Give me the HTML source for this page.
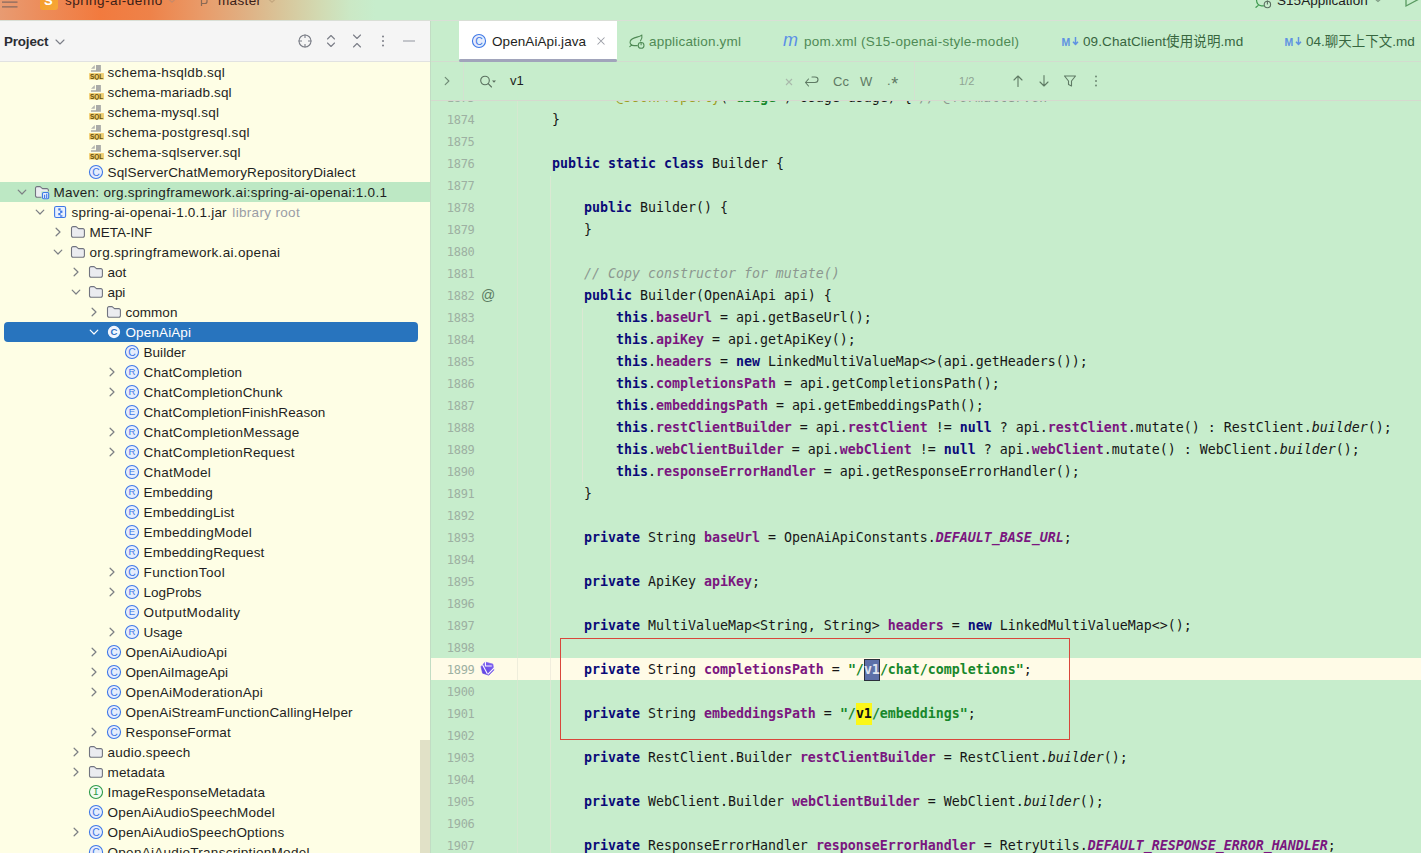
<!DOCTYPE html>
<html lang="en"><head><meta charset="utf-8"><title>OpenAiApi.java</title>
<style>
*{box-sizing:border-box;margin:0;padding:0}
html,body{width:1421px;height:853px;overflow:hidden;background:#c7edcc}
body{position:relative;font-family:"Liberation Sans","Noto Sans CJK SC",sans-serif;font-size:13px;color:#1e1f22}
.abs{position:absolute}
svg{display:block}
/* top bar */
#topbar{position:absolute;left:0;top:0;width:1421px;height:20px;overflow:hidden;
 background:linear-gradient(90deg,#e89b72 0px,#ec8d5c 40px,#f27a3e 100px,#ee8249 150px,#e99a68 200px,#e0b083 245px,#d8c79c 285px,#d2dab2 320px,#cbe8c5 350px,#c7edcc 375px)}
#topline{position:absolute;left:0;top:20px;width:1421px;height:1px;background:#d9dfd6}
#topbar .t{position:absolute;font-size:13.5px;line-height:18px;top:-8px;color:#3a2018;white-space:nowrap}
/* project panel */
#ppanel{position:absolute;left:0;top:21px;width:430px;height:832px;background:#fefee5;overflow:hidden}
#phead{position:absolute;left:0;top:0;width:430px;height:40px;background:#f5f5f5}
#pheadline{position:absolute;left:0;top:40px;width:430px;height:1px;background:#e1e2e1}
#phead .title{position:absolute;left:4px;top:12px;font-size:13.4px;line-height:18px;font-weight:bold;color:#2b2d33;letter-spacing:-0.15px}
#pborder{position:absolute;left:430px;top:21px;width:1px;height:832px;background:#c2dcc4}
.row{position:absolute;left:0;width:430px;height:20px;line-height:20px;white-space:nowrap}
.row .tx{position:absolute;top:1px;font-size:13.5px;color:#1e1f22;letter-spacing:0}
.row .icw{position:absolute;top:2px;width:16px;height:16px}
.row .arw{position:absolute;top:2px;width:16px;height:16px}
.row .lib{color:#9a9da6;margin-left:5.5px;letter-spacing:0.33px}
.mvnrow{background:#bde8c4}
.sel .tx{color:#fff}
.selbg{position:absolute;left:4px;top:0;width:414px;height:20px;border-radius:4px;background:#2874be}
#pscroll{position:absolute;left:420px;top:719px;width:10px;height:113px;background:#e1e1c7}
/* tabs */
#tabs{position:absolute;left:431px;top:21px;width:990px;height:41px}
#tabline{position:absolute;left:431px;top:61px;width:990px;height:1px;background:#d3dccf}
#tabact{position:absolute;left:459px;top:21px;width:158px;height:38px;background:#fff}
#tabul{position:absolute;left:459px;top:59px;width:158px;height:3px;background:#a1a4bb;border-radius:1.5px}
.tab{position:absolute;top:33px;font-size:13.5px;line-height:18px;white-space:nowrap;color:#1e1f22}
.tab.g{color:#4f8a55}
.tab.gy{color:#5f7a64}
/* search */
#search{position:absolute;left:431px;top:62px;width:990px;height:38px}
#searchline{position:absolute;left:431px;top:100px;width:990px;height:1px;background:#d6d9cf}
.vdiv{position:absolute;top:62px;width:1px;height:38px;background:#d3e2d0}
/* editor */
#editor{position:absolute;left:431px;top:101px;width:990px;height:752px;overflow:hidden}
.ln{position:absolute;left:431px;width:43.5px;text-align:right;height:22px;line-height:22px;font-family:"DejaVu Sans Mono","Liberation Mono",monospace;font-size:12px;color:#9db0a2;letter-spacing:-0.3px}
.cl{position:absolute;left:520px;height:22px;line-height:22px;white-space:pre;font-family:"DejaVu Sans Mono","Liberation Mono",monospace;font-size:13.29px;color:#161616}
.cl b{font-weight:bold}
.k{color:#0a0a78}
.f{color:#7a167f}
.i{font-style:italic}
.s{color:#17872a}
.c{color:#8c9890}
.an{color:#9e9d24}
.v1s{display:inline-block;height:22px;vertical-align:top;background:#5d70a8;color:#dfe3ef;box-shadow:inset 0 0 0 1px #2b2f3a}
.v1y{display:inline-block;height:22px;vertical-align:top;background:#fbf719;color:#111}
#curline{position:absolute;left:431px;top:658px;width:990px;height:22px;background:#fffbe7}
#gutline{position:absolute;left:517px;top:101px;width:1px;height:752px;background:rgba(226,226,212,0.55)}
.guide{position:absolute;width:1px;background:rgba(232,228,215,0.6)}
#redbox{position:absolute;left:560px;top:638px;width:510px;height:102px;border:1.5px solid #d9463b}
#clipmask{position:absolute;left:431px;top:62px;width:990px;height:39px;background:#c7edcc}

.md{font-size:10.5px;line-height:14px;font-weight:bold;color:#5f92e2;letter-spacing:0}

</style></head>
<body>
<div id="topbar">
  <svg class="abs" style="left:0;top:0" width="20" height="8" viewBox="0 0 20 8"><path d="M2 2.200 H17.500 M2 6.900 H17.500" stroke="#86695f" stroke-width="1.200" fill="none"/></svg>
  <div class="abs" style="left:39.500px;top:-10.500px;width:18px;height:20px;border-radius:3px;background:linear-gradient(135deg,#f59a2c,#f6a836)"></div>
  <div class="t" style="left:44px;color:#fff;font-weight:bold;font-size:13px;top:-8px">S</div>
  <div class="t" style="left:65px;letter-spacing:0.55px">spring-ai-demo</div>
  <svg class="abs" style="left:165.500px;top:-1.500px" width="12" height="6" viewBox="0 0 12 6"><path d="M2.500 0 L6 3.200 L9.500 0" stroke="#c98a68" stroke-width="1.2" fill="none"/></svg>
  <svg class="abs" style="left:198px;top:0" width="12" height="8" viewBox="0 0 12 8"><path d="M3.5 0 V6 M3.5 3.5 H7 Q9 3.5 9 1.5 V0" stroke="#8a6a55" stroke-width="1.2" fill="none"/></svg>
  <div class="t" style="left:218px;letter-spacing:0.35px">master</div>
  <svg class="abs" style="left:266px;top:-1.500px" width="12" height="6" viewBox="0 0 12 6"><path d="M2.500 0 L6 3.200 L9.500 0" stroke="#c4a880" stroke-width="1.2" fill="none"/></svg>
  <svg class="abs" style="left:1255px;top:0" width="18" height="10" viewBox="0 0 18 10"><path d="M1.500 0 Q1.800 5.500 6.500 5.800 H8.500 M1 7.300 L3 5.600" stroke="#3f9a50" stroke-width="1.200" fill="none" stroke-linecap="round"/><circle cx="12.400" cy="4.500" r="3.200" stroke="#5a6f60" stroke-width="1.100" fill="none"/><path d="M12.400 0.500 V4.500" stroke="#5a6f60" stroke-width="1.100"/></svg>
  <div class="t" style="left:1277px;color:#1c201c;letter-spacing:0.05px">S15Application</div>
  <svg class="abs" style="left:1372px;top:-2px" width="12" height="6" viewBox="0 0 12 6"><path d="M2 0 L6 3.5 L10 0" stroke="#7f9a85" stroke-width="1.2" fill="none"/></svg>
  <svg class="abs" style="left:1404px;top:0" width="17" height="8" viewBox="0 0 17 8"><path d="M2 0 V6 L17 -2" stroke="#5a9a62" stroke-width="1.3" fill="none"/></svg>
</div>
<div id="topline"></div>

<div id="ppanel">
  <div id="phead">
    <div class="title">Project</div>
    <svg class="abs" style="left:52px;top:13px" width="16" height="16" viewBox="0 0 16 16"><path d="M4 6 L8 10 L12 6" fill="none" stroke="#7b7e87" stroke-width="1.1" stroke-linecap="round" stroke-linejoin="round"/></svg>
    <svg class="abs" style="left:297px;top:12px" width="16" height="16" viewBox="0 0 16 16"><circle cx="8" cy="8" r="6" fill="none" stroke="#7b7e87" stroke-width="1.1"/><path d="M8 1.5 V5 M8 11 V14.5 M1.5 8 H5 M11 8 H14.5" stroke="#7b7e87" stroke-width="1.1"/></svg>
    <svg class="abs" style="left:323px;top:12px" width="16" height="16" viewBox="0 0 16 16"><path d="M4.5 6 L8 2.5 L11.5 6 M4.5 10 L8 13.5 L11.5 10" fill="none" stroke="#7b7e87" stroke-width="1.1" stroke-linecap="round" stroke-linejoin="round"/></svg>
    <svg class="abs" style="left:349px;top:12px" width="16" height="16" viewBox="0 0 16 16"><path d="M4.5 2 L8 5.5 L11.5 2 M4.5 14 L8 10.5 L11.5 14" fill="none" stroke="#7b7e87" stroke-width="1.1" stroke-linecap="round" stroke-linejoin="round"/></svg>
    <svg class="abs" style="left:375px;top:12px" width="16" height="16" viewBox="0 0 16 16"><circle cx="8" cy="3.5" r="1" fill="#7b7e87"/><circle cx="8" cy="8" r="1" fill="#7b7e87"/><circle cx="8" cy="12.5" r="1" fill="#7b7e87"/></svg>
    <svg class="abs" style="left:401px;top:12px" width="16" height="16" viewBox="0 0 16 16"><path d="M2 8 H14" stroke="#9a9da6" stroke-width="1.1"/></svg>
  </div>
  <div id="pheadline"></div>
  <div id="tree" style="position:absolute;left:0;top:-21px;width:430px;height:874px">
<div class="row" style="top:62px"><span class="icw" style="left:88px"><svg class="ic" width="16" height="16" viewBox="0 0 16 16"><path d="M3 4.700 L6.800 0.900 L6.800 4.700 Z" fill="#b4b5b0"/><path d="M8 0.900 H12.900 V7.700 H3 V6.200 H8 Z" fill="#aaaba8"/><rect x="1.100" y="9.100" width="14.800" height="6.500" fill="#f1cd6e"/><text x="8.500" y="14.900" text-anchor="middle" font-family="Liberation Sans, sans-serif" font-weight="bold" font-size="6.800" fill="#65500c" textLength="13.200" lengthAdjust="spacingAndGlyphs">SQL</text></svg></span><span class="tx" style="left:107.5px;letter-spacing:0.30px">schema-hsqldb.sql</span></div>
<div class="row" style="top:82px"><span class="icw" style="left:88px"><svg class="ic" width="16" height="16" viewBox="0 0 16 16"><path d="M3 4.700 L6.800 0.900 L6.800 4.700 Z" fill="#b4b5b0"/><path d="M8 0.900 H12.900 V7.700 H3 V6.200 H8 Z" fill="#aaaba8"/><rect x="1.100" y="9.100" width="14.800" height="6.500" fill="#f1cd6e"/><text x="8.500" y="14.900" text-anchor="middle" font-family="Liberation Sans, sans-serif" font-weight="bold" font-size="6.800" fill="#65500c" textLength="13.200" lengthAdjust="spacingAndGlyphs">SQL</text></svg></span><span class="tx" style="left:107.5px;letter-spacing:0.15px">schema-mariadb.sql</span></div>
<div class="row" style="top:102px"><span class="icw" style="left:88px"><svg class="ic" width="16" height="16" viewBox="0 0 16 16"><path d="M3 4.700 L6.800 0.900 L6.800 4.700 Z" fill="#b4b5b0"/><path d="M8 0.900 H12.900 V7.700 H3 V6.200 H8 Z" fill="#aaaba8"/><rect x="1.100" y="9.100" width="14.800" height="6.500" fill="#f1cd6e"/><text x="8.500" y="14.900" text-anchor="middle" font-family="Liberation Sans, sans-serif" font-weight="bold" font-size="6.800" fill="#65500c" textLength="13.200" lengthAdjust="spacingAndGlyphs">SQL</text></svg></span><span class="tx" style="left:107.5px;letter-spacing:0.23px">schema-mysql.sql</span></div>
<div class="row" style="top:122px"><span class="icw" style="left:88px"><svg class="ic" width="16" height="16" viewBox="0 0 16 16"><path d="M3 4.700 L6.800 0.900 L6.800 4.700 Z" fill="#b4b5b0"/><path d="M8 0.900 H12.900 V7.700 H3 V6.200 H8 Z" fill="#aaaba8"/><rect x="1.100" y="9.100" width="14.800" height="6.500" fill="#f1cd6e"/><text x="8.500" y="14.900" text-anchor="middle" font-family="Liberation Sans, sans-serif" font-weight="bold" font-size="6.800" fill="#65500c" textLength="13.200" lengthAdjust="spacingAndGlyphs">SQL</text></svg></span><span class="tx" style="left:107.5px;letter-spacing:0.35px">schema-postgresql.sql</span></div>
<div class="row" style="top:142px"><span class="icw" style="left:88px"><svg class="ic" width="16" height="16" viewBox="0 0 16 16"><path d="M3 4.700 L6.800 0.900 L6.800 4.700 Z" fill="#b4b5b0"/><path d="M8 0.900 H12.900 V7.700 H3 V6.200 H8 Z" fill="#aaaba8"/><rect x="1.100" y="9.100" width="14.800" height="6.500" fill="#f1cd6e"/><text x="8.500" y="14.900" text-anchor="middle" font-family="Liberation Sans, sans-serif" font-weight="bold" font-size="6.800" fill="#65500c" textLength="13.200" lengthAdjust="spacingAndGlyphs">SQL</text></svg></span><span class="tx" style="left:107.5px;letter-spacing:0.33px">schema-sqlserver.sql</span></div>
<div class="row" style="top:162px"><span class="icw" style="left:88px"><svg class="ic" width="16" height="16" viewBox="0 0 16 16"><circle cx="8" cy="8" r="6.55" fill="#e6edfc" stroke="#3f78e6" stroke-width="1.1"/><text x="8" y="11.7" text-anchor="middle" font-family="Liberation Sans, sans-serif" font-size="10.4" font-weight="normal" fill="#3f78e6">C</text></svg></span><span class="tx" style="left:107.5px;letter-spacing:0.16px">SqlServerChatMemoryRepositoryDialect</span></div>
<div class="row mvnrow" style="top:182px"><span class="arw" style="left:13.5px"><svg class="ar" width="16" height="16" viewBox="0 0 16 16"><path d="M4.2 6.1 L8 10 L11.8 6.1" fill="none" stroke="#7c7f84" stroke-width="1.2" stroke-linecap="round" stroke-linejoin="round"/></svg></span><span class="icw" style="left:34px"><svg class="ic" width="16" height="16" viewBox="0 0 16 16"><path d="M1.5 4.1 a1.5 1.5 0 0 1 1.5 -1.5 h3.1 l2.4 2 h4.4 a1.5 1.5 0 0 1 1.5 1.5 v5.6 a1.5 1.5 0 0 1 -1.5 1.5 h-9.900 a1.5 1.5 0 0 1 -1.5 -1.5 z" fill="#ebecf0" stroke="#71747f" stroke-width="1.1" stroke-linejoin="round"/><rect x="7.4" y="7.4" width="9" height="9" fill="#bde8c4"/><rect x="8.5" y="8.5" width="6.2" height="6.2" rx="1.2" fill="#e6eefc" stroke="#3f78e6" stroke-width="1.1"/><path d="M10.6 10.8 V14 M12.7 9.8 V14" stroke="#3f78e6" stroke-width="1.1" fill="none"/></svg></span><span class="tx" style="left:53.5px;letter-spacing:0.27px">Maven: org.springframework.ai:spring-ai-openai:1.0.1</span></div>
<div class="row" style="top:202px"><span class="arw" style="left:31.5px"><svg class="ar" width="16" height="16" viewBox="0 0 16 16"><path d="M4.2 6.1 L8 10 L11.8 6.1" fill="none" stroke="#7c7f84" stroke-width="1.2" stroke-linecap="round" stroke-linejoin="round"/></svg></span><span class="icw" style="left:52px"><svg class="ic" width="16" height="16" viewBox="0 0 16 16"><rect x="2.6" y="2.5" width="11" height="11" rx="1.6" fill="#e9f0fd" stroke="#3f78e6" stroke-width="1.1"/><rect x="6.3" y="4.3" width="2.3" height="2.2" fill="#3f78e6"/><rect x="8.1" y="6.6" width="2.3" height="2.3" fill="#3f78e6"/><rect x="6.3" y="9" width="2.3" height="2.2" fill="#3f78e6"/><rect x="8.1" y="11.3" width="2.3" height="1.4" fill="#3f78e6"/></svg></span><span class="tx" style="left:71.5px;letter-spacing:0.20px">spring-ai-openai-1.0.1.jar<span class="lib">library root</span></span></div>
<div class="row" style="top:222px"><span class="arw" style="left:49.5px"><svg class="ar" width="16" height="16" viewBox="0 0 16 16"><path d="M6.1 4.2 L10 8 L6.1 11.8" fill="none" stroke="#7c7f84" stroke-width="1.2" stroke-linecap="round" stroke-linejoin="round"/></svg></span><span class="icw" style="left:70px"><svg class="ic" width="16" height="16" viewBox="0 0 16 16"><path d="M1.5 4.1 a1.5 1.5 0 0 1 1.5 -1.5 h3.1 l2.4 2 h4.4 a1.5 1.5 0 0 1 1.5 1.5 v5.6 a1.5 1.5 0 0 1 -1.5 1.5 h-9.900 a1.5 1.5 0 0 1 -1.5 -1.5 z" fill="#ebecf0" stroke="#71747f" stroke-width="1.1" stroke-linejoin="round"/></svg></span><span class="tx" style="left:89.5px;letter-spacing:0.01px">META-INF</span></div>
<div class="row" style="top:242px"><span class="arw" style="left:49.5px"><svg class="ar" width="16" height="16" viewBox="0 0 16 16"><path d="M4.2 6.1 L8 10 L11.8 6.1" fill="none" stroke="#7c7f84" stroke-width="1.2" stroke-linecap="round" stroke-linejoin="round"/></svg></span><span class="icw" style="left:70px"><svg class="ic" width="16" height="16" viewBox="0 0 16 16"><path d="M1.5 4.1 a1.5 1.5 0 0 1 1.5 -1.5 h3.1 l2.4 2 h4.4 a1.5 1.5 0 0 1 1.5 1.5 v5.6 a1.5 1.5 0 0 1 -1.5 1.5 h-9.900 a1.5 1.5 0 0 1 -1.5 -1.5 z" fill="#ebecf0" stroke="#71747f" stroke-width="1.1" stroke-linejoin="round"/></svg></span><span class="tx" style="left:89.5px;letter-spacing:0.32px">org.springframework.ai.openai</span></div>
<div class="row" style="top:262px"><span class="arw" style="left:67.5px"><svg class="ar" width="16" height="16" viewBox="0 0 16 16"><path d="M6.1 4.2 L10 8 L6.1 11.8" fill="none" stroke="#7c7f84" stroke-width="1.2" stroke-linecap="round" stroke-linejoin="round"/></svg></span><span class="icw" style="left:88px"><svg class="ic" width="16" height="16" viewBox="0 0 16 16"><path d="M1.5 4.1 a1.5 1.5 0 0 1 1.5 -1.5 h3.1 l2.4 2 h4.4 a1.5 1.5 0 0 1 1.5 1.5 v5.6 a1.5 1.5 0 0 1 -1.5 1.5 h-9.900 a1.5 1.5 0 0 1 -1.5 -1.5 z" fill="#ebecf0" stroke="#71747f" stroke-width="1.1" stroke-linejoin="round"/></svg></span><span class="tx" style="left:107.5px;letter-spacing:0.01px">aot</span></div>
<div class="row" style="top:282px"><span class="arw" style="left:67.5px"><svg class="ar" width="16" height="16" viewBox="0 0 16 16"><path d="M4.2 6.1 L8 10 L11.8 6.1" fill="none" stroke="#7c7f84" stroke-width="1.2" stroke-linecap="round" stroke-linejoin="round"/></svg></span><span class="icw" style="left:88px"><svg class="ic" width="16" height="16" viewBox="0 0 16 16"><path d="M1.5 4.1 a1.5 1.5 0 0 1 1.5 -1.5 h3.1 l2.4 2 h4.4 a1.5 1.5 0 0 1 1.5 1.5 v5.6 a1.5 1.5 0 0 1 -1.5 1.5 h-9.900 a1.5 1.5 0 0 1 -1.5 -1.5 z" fill="#ebecf0" stroke="#71747f" stroke-width="1.1" stroke-linejoin="round"/></svg></span><span class="tx" style="left:107.5px;letter-spacing:-0.10px">api</span></div>
<div class="row" style="top:302px"><span class="arw" style="left:85.5px"><svg class="ar" width="16" height="16" viewBox="0 0 16 16"><path d="M6.1 4.2 L10 8 L6.1 11.8" fill="none" stroke="#7c7f84" stroke-width="1.2" stroke-linecap="round" stroke-linejoin="round"/></svg></span><span class="icw" style="left:106px"><svg class="ic" width="16" height="16" viewBox="0 0 16 16"><path d="M1.5 4.1 a1.5 1.5 0 0 1 1.5 -1.5 h3.1 l2.4 2 h4.4 a1.5 1.5 0 0 1 1.5 1.5 v5.6 a1.5 1.5 0 0 1 -1.5 1.5 h-9.900 a1.5 1.5 0 0 1 -1.5 -1.5 z" fill="#ebecf0" stroke="#71747f" stroke-width="1.1" stroke-linejoin="round"/></svg></span><span class="tx" style="left:125.5px;letter-spacing:0.03px">common</span></div>
<div class="row sel" style="top:322px"><div class="selbg"></div><span class="arw" style="left:85.5px"><svg class="ar" width="16" height="16" viewBox="0 0 16 16"><path d="M4.2 6.1 L8 10 L11.8 6.1" fill="none" stroke="#ffffff" stroke-width="1.2" stroke-linecap="round" stroke-linejoin="round"/></svg></span><span class="icw" style="left:106px"><svg class="ic" width="16" height="16" viewBox="0 0 16 16"><circle cx="8" cy="8" r="5.6" fill="#f1f6fe" stroke="#f1f6fe" stroke-width="1.1"/><text x="8" y="11.45" text-anchor="middle" font-family="Liberation Sans, sans-serif" font-size="9.6" font-weight="bold" fill="#2a6fc2">C</text></svg></span><span class="tx" style="left:125.5px;letter-spacing:0.12px">OpenAiApi</span></div>
<div class="row" style="top:342px"><span class="icw" style="left:124px"><svg class="ic" width="16" height="16" viewBox="0 0 16 16"><circle cx="8" cy="8" r="6.55" fill="#e6edfc" stroke="#3f78e6" stroke-width="1.1"/><text x="8" y="11.7" text-anchor="middle" font-family="Liberation Sans, sans-serif" font-size="10.4" font-weight="normal" fill="#3f78e6">C</text></svg></span><span class="tx" style="left:143.5px;letter-spacing:0.04px">Builder</span></div>
<div class="row" style="top:362px"><span class="arw" style="left:103.5px"><svg class="ar" width="16" height="16" viewBox="0 0 16 16"><path d="M6.1 4.2 L10 8 L6.1 11.8" fill="none" stroke="#7c7f84" stroke-width="1.2" stroke-linecap="round" stroke-linejoin="round"/></svg></span><span class="icw" style="left:124px"><svg class="ic" width="16" height="16" viewBox="0 0 16 16"><circle cx="8" cy="8" r="6.55" fill="#e6edfc" stroke="#3f78e6" stroke-width="1.1"/><text x="8" y="11.4" text-anchor="middle" font-family="Liberation Sans, sans-serif" font-size="9.6" font-weight="normal" fill="#3f78e6">R</text></svg></span><span class="tx" style="left:143.5px;letter-spacing:0.14px">ChatCompletion</span></div>
<div class="row" style="top:382px"><span class="arw" style="left:103.5px"><svg class="ar" width="16" height="16" viewBox="0 0 16 16"><path d="M6.1 4.2 L10 8 L6.1 11.8" fill="none" stroke="#7c7f84" stroke-width="1.2" stroke-linecap="round" stroke-linejoin="round"/></svg></span><span class="icw" style="left:124px"><svg class="ic" width="16" height="16" viewBox="0 0 16 16"><circle cx="8" cy="8" r="6.55" fill="#e6edfc" stroke="#3f78e6" stroke-width="1.1"/><text x="8" y="11.4" text-anchor="middle" font-family="Liberation Sans, sans-serif" font-size="9.6" font-weight="normal" fill="#3f78e6">R</text></svg></span><span class="tx" style="left:143.5px;letter-spacing:0.17px">ChatCompletionChunk</span></div>
<div class="row" style="top:402px"><span class="icw" style="left:124px"><svg class="ic" width="16" height="16" viewBox="0 0 16 16"><circle cx="8" cy="8" r="6.55" fill="#e6edfc" stroke="#3f78e6" stroke-width="1.1"/><text x="8" y="11.4" text-anchor="middle" font-family="Liberation Sans, sans-serif" font-size="9.6" font-weight="normal" fill="#3f78e6">E</text></svg></span><span class="tx" style="left:143.5px;letter-spacing:0.10px">ChatCompletionFinishReason</span></div>
<div class="row" style="top:422px"><span class="arw" style="left:103.5px"><svg class="ar" width="16" height="16" viewBox="0 0 16 16"><path d="M6.1 4.2 L10 8 L6.1 11.8" fill="none" stroke="#7c7f84" stroke-width="1.2" stroke-linecap="round" stroke-linejoin="round"/></svg></span><span class="icw" style="left:124px"><svg class="ic" width="16" height="16" viewBox="0 0 16 16"><circle cx="8" cy="8" r="6.55" fill="#e6edfc" stroke="#3f78e6" stroke-width="1.1"/><text x="8" y="11.4" text-anchor="middle" font-family="Liberation Sans, sans-serif" font-size="9.6" font-weight="normal" fill="#3f78e6">R</text></svg></span><span class="tx" style="left:143.5px;letter-spacing:0.21px">ChatCompletionMessage</span></div>
<div class="row" style="top:442px"><span class="arw" style="left:103.5px"><svg class="ar" width="16" height="16" viewBox="0 0 16 16"><path d="M6.1 4.2 L10 8 L6.1 11.8" fill="none" stroke="#7c7f84" stroke-width="1.2" stroke-linecap="round" stroke-linejoin="round"/></svg></span><span class="icw" style="left:124px"><svg class="ic" width="16" height="16" viewBox="0 0 16 16"><circle cx="8" cy="8" r="6.55" fill="#e6edfc" stroke="#3f78e6" stroke-width="1.1"/><text x="8" y="11.4" text-anchor="middle" font-family="Liberation Sans, sans-serif" font-size="9.6" font-weight="normal" fill="#3f78e6">R</text></svg></span><span class="tx" style="left:143.5px;letter-spacing:0.19px">ChatCompletionRequest</span></div>
<div class="row" style="top:462px"><span class="icw" style="left:124px"><svg class="ic" width="16" height="16" viewBox="0 0 16 16"><circle cx="8" cy="8" r="6.55" fill="#e6edfc" stroke="#3f78e6" stroke-width="1.1"/><text x="8" y="11.4" text-anchor="middle" font-family="Liberation Sans, sans-serif" font-size="9.6" font-weight="normal" fill="#3f78e6">E</text></svg></span><span class="tx" style="left:143.5px;letter-spacing:0.25px">ChatModel</span></div>
<div class="row" style="top:482px"><span class="icw" style="left:124px"><svg class="ic" width="16" height="16" viewBox="0 0 16 16"><circle cx="8" cy="8" r="6.55" fill="#e6edfc" stroke="#3f78e6" stroke-width="1.1"/><text x="8" y="11.4" text-anchor="middle" font-family="Liberation Sans, sans-serif" font-size="9.6" font-weight="normal" fill="#3f78e6">R</text></svg></span><span class="tx" style="left:143.5px;letter-spacing:0.11px">Embedding</span></div>
<div class="row" style="top:502px"><span class="icw" style="left:124px"><svg class="ic" width="16" height="16" viewBox="0 0 16 16"><circle cx="8" cy="8" r="6.55" fill="#e6edfc" stroke="#3f78e6" stroke-width="1.1"/><text x="8" y="11.4" text-anchor="middle" font-family="Liberation Sans, sans-serif" font-size="9.6" font-weight="normal" fill="#3f78e6">R</text></svg></span><span class="tx" style="left:143.5px;letter-spacing:0.13px">EmbeddingList</span></div>
<div class="row" style="top:522px"><span class="icw" style="left:124px"><svg class="ic" width="16" height="16" viewBox="0 0 16 16"><circle cx="8" cy="8" r="6.55" fill="#e6edfc" stroke="#3f78e6" stroke-width="1.1"/><text x="8" y="11.4" text-anchor="middle" font-family="Liberation Sans, sans-serif" font-size="9.6" font-weight="normal" fill="#3f78e6">E</text></svg></span><span class="tx" style="left:143.5px;letter-spacing:0.24px">EmbeddingModel</span></div>
<div class="row" style="top:542px"><span class="icw" style="left:124px"><svg class="ic" width="16" height="16" viewBox="0 0 16 16"><circle cx="8" cy="8" r="6.55" fill="#e6edfc" stroke="#3f78e6" stroke-width="1.1"/><text x="8" y="11.4" text-anchor="middle" font-family="Liberation Sans, sans-serif" font-size="9.6" font-weight="normal" fill="#3f78e6">R</text></svg></span><span class="tx" style="left:143.5px;letter-spacing:0.15px">EmbeddingRequest</span></div>
<div class="row" style="top:562px"><span class="arw" style="left:103.5px"><svg class="ar" width="16" height="16" viewBox="0 0 16 16"><path d="M6.1 4.2 L10 8 L6.1 11.8" fill="none" stroke="#7c7f84" stroke-width="1.2" stroke-linecap="round" stroke-linejoin="round"/></svg></span><span class="icw" style="left:124px"><svg class="ic" width="16" height="16" viewBox="0 0 16 16"><circle cx="8" cy="8" r="6.55" fill="#e6edfc" stroke="#3f78e6" stroke-width="1.1"/><text x="8" y="11.7" text-anchor="middle" font-family="Liberation Sans, sans-serif" font-size="10.4" font-weight="normal" fill="#3f78e6">C</text></svg></span><span class="tx" style="left:143.5px;letter-spacing:0.43px">FunctionTool</span></div>
<div class="row" style="top:582px"><span class="arw" style="left:103.5px"><svg class="ar" width="16" height="16" viewBox="0 0 16 16"><path d="M6.1 4.2 L10 8 L6.1 11.8" fill="none" stroke="#7c7f84" stroke-width="1.2" stroke-linecap="round" stroke-linejoin="round"/></svg></span><span class="icw" style="left:124px"><svg class="ic" width="16" height="16" viewBox="0 0 16 16"><circle cx="8" cy="8" r="6.55" fill="#e6edfc" stroke="#3f78e6" stroke-width="1.1"/><text x="8" y="11.4" text-anchor="middle" font-family="Liberation Sans, sans-serif" font-size="9.6" font-weight="normal" fill="#3f78e6">R</text></svg></span><span class="tx" style="left:143.5px;letter-spacing:0.03px">LogProbs</span></div>
<div class="row" style="top:602px"><span class="icw" style="left:124px"><svg class="ic" width="16" height="16" viewBox="0 0 16 16"><circle cx="8" cy="8" r="6.55" fill="#e6edfc" stroke="#3f78e6" stroke-width="1.1"/><text x="8" y="11.4" text-anchor="middle" font-family="Liberation Sans, sans-serif" font-size="9.6" font-weight="normal" fill="#3f78e6">E</text></svg></span><span class="tx" style="left:143.5px;letter-spacing:0.43px">OutputModality</span></div>
<div class="row" style="top:622px"><span class="arw" style="left:103.5px"><svg class="ar" width="16" height="16" viewBox="0 0 16 16"><path d="M6.1 4.2 L10 8 L6.1 11.8" fill="none" stroke="#7c7f84" stroke-width="1.2" stroke-linecap="round" stroke-linejoin="round"/></svg></span><span class="icw" style="left:124px"><svg class="ic" width="16" height="16" viewBox="0 0 16 16"><circle cx="8" cy="8" r="6.55" fill="#e6edfc" stroke="#3f78e6" stroke-width="1.1"/><text x="8" y="11.4" text-anchor="middle" font-family="Liberation Sans, sans-serif" font-size="9.6" font-weight="normal" fill="#3f78e6">R</text></svg></span><span class="tx" style="left:143.5px;letter-spacing:-0.03px">Usage</span></div>
<div class="row" style="top:642px"><span class="arw" style="left:85.5px"><svg class="ar" width="16" height="16" viewBox="0 0 16 16"><path d="M6.1 4.2 L10 8 L6.1 11.8" fill="none" stroke="#7c7f84" stroke-width="1.2" stroke-linecap="round" stroke-linejoin="round"/></svg></span><span class="icw" style="left:106px"><svg class="ic" width="16" height="16" viewBox="0 0 16 16"><circle cx="8" cy="8" r="6.55" fill="#e6edfc" stroke="#3f78e6" stroke-width="1.1"/><text x="8" y="11.7" text-anchor="middle" font-family="Liberation Sans, sans-serif" font-size="10.4" font-weight="normal" fill="#3f78e6">C</text></svg></span><span class="tx" style="left:125.5px;letter-spacing:0.18px">OpenAiAudioApi</span></div>
<div class="row" style="top:662px"><span class="arw" style="left:85.5px"><svg class="ar" width="16" height="16" viewBox="0 0 16 16"><path d="M6.1 4.2 L10 8 L6.1 11.8" fill="none" stroke="#7c7f84" stroke-width="1.2" stroke-linecap="round" stroke-linejoin="round"/></svg></span><span class="icw" style="left:106px"><svg class="ic" width="16" height="16" viewBox="0 0 16 16"><circle cx="8" cy="8" r="6.55" fill="#e6edfc" stroke="#3f78e6" stroke-width="1.1"/><text x="8" y="11.7" text-anchor="middle" font-family="Liberation Sans, sans-serif" font-size="10.4" font-weight="normal" fill="#3f78e6">C</text></svg></span><span class="tx" style="left:125.5px;letter-spacing:0.03px">OpenAiImageApi</span></div>
<div class="row" style="top:682px"><span class="arw" style="left:85.5px"><svg class="ar" width="16" height="16" viewBox="0 0 16 16"><path d="M6.1 4.2 L10 8 L6.1 11.8" fill="none" stroke="#7c7f84" stroke-width="1.2" stroke-linecap="round" stroke-linejoin="round"/></svg></span><span class="icw" style="left:106px"><svg class="ic" width="16" height="16" viewBox="0 0 16 16"><circle cx="8" cy="8" r="6.55" fill="#e6edfc" stroke="#3f78e6" stroke-width="1.1"/><text x="8" y="11.7" text-anchor="middle" font-family="Liberation Sans, sans-serif" font-size="10.4" font-weight="normal" fill="#3f78e6">C</text></svg></span><span class="tx" style="left:125.5px;letter-spacing:0.29px">OpenAiModerationApi</span></div>
<div class="row" style="top:702px"><span class="icw" style="left:106px"><svg class="ic" width="16" height="16" viewBox="0 0 16 16"><circle cx="8" cy="8" r="6.55" fill="#e6edfc" stroke="#3f78e6" stroke-width="1.1"/><text x="8" y="11.7" text-anchor="middle" font-family="Liberation Sans, sans-serif" font-size="10.4" font-weight="normal" fill="#3f78e6">C</text></svg></span><span class="tx" style="left:125.5px;letter-spacing:0.18px">OpenAiStreamFunctionCallingHelper</span></div>
<div class="row" style="top:722px"><span class="arw" style="left:85.5px"><svg class="ar" width="16" height="16" viewBox="0 0 16 16"><path d="M6.1 4.2 L10 8 L6.1 11.8" fill="none" stroke="#7c7f84" stroke-width="1.2" stroke-linecap="round" stroke-linejoin="round"/></svg></span><span class="icw" style="left:106px"><svg class="ic" width="16" height="16" viewBox="0 0 16 16"><circle cx="8" cy="8" r="6.55" fill="#e6edfc" stroke="#3f78e6" stroke-width="1.1"/><text x="8" y="11.7" text-anchor="middle" font-family="Liberation Sans, sans-serif" font-size="10.4" font-weight="normal" fill="#3f78e6">C</text></svg></span><span class="tx" style="left:125.5px;letter-spacing:0.13px">ResponseFormat</span></div>
<div class="row" style="top:742px"><span class="arw" style="left:67.5px"><svg class="ar" width="16" height="16" viewBox="0 0 16 16"><path d="M6.1 4.2 L10 8 L6.1 11.8" fill="none" stroke="#7c7f84" stroke-width="1.2" stroke-linecap="round" stroke-linejoin="round"/></svg></span><span class="icw" style="left:88px"><svg class="ic" width="16" height="16" viewBox="0 0 16 16"><path d="M1.5 4.1 a1.5 1.5 0 0 1 1.5 -1.5 h3.1 l2.4 2 h4.4 a1.5 1.5 0 0 1 1.5 1.5 v5.6 a1.5 1.5 0 0 1 -1.5 1.5 h-9.900 a1.5 1.5 0 0 1 -1.5 -1.5 z" fill="#ebecf0" stroke="#71747f" stroke-width="1.1" stroke-linejoin="round"/></svg></span><span class="tx" style="left:107.5px;letter-spacing:0.23px">audio.speech</span></div>
<div class="row" style="top:762px"><span class="arw" style="left:67.5px"><svg class="ar" width="16" height="16" viewBox="0 0 16 16"><path d="M6.1 4.2 L10 8 L6.1 11.8" fill="none" stroke="#7c7f84" stroke-width="1.2" stroke-linecap="round" stroke-linejoin="round"/></svg></span><span class="icw" style="left:88px"><svg class="ic" width="16" height="16" viewBox="0 0 16 16"><path d="M1.5 4.1 a1.5 1.5 0 0 1 1.5 -1.5 h3.1 l2.4 2 h4.4 a1.5 1.5 0 0 1 1.5 1.5 v5.6 a1.5 1.5 0 0 1 -1.5 1.5 h-9.900 a1.5 1.5 0 0 1 -1.5 -1.5 z" fill="#ebecf0" stroke="#71747f" stroke-width="1.1" stroke-linejoin="round"/></svg></span><span class="tx" style="left:107.5px;letter-spacing:0.13px">metadata</span></div>
<div class="row" style="top:782px"><span class="icw" style="left:88px"><svg class="ic" width="16" height="16" viewBox="0 0 16 16"><circle cx="8" cy="8" r="6.55" fill="#f1fbf2" stroke="#2f9a4a" stroke-width="1.1"/><text x="8" y="11.4" text-anchor="middle" font-family="Liberation Mono, monospace" font-size="10.5" font-weight="normal" fill="#2f9a4a">I</text></svg></span><span class="tx" style="left:107.5px;letter-spacing:0.14px">ImageResponseMetadata</span></div>
<div class="row" style="top:802px"><span class="icw" style="left:88px"><svg class="ic" width="16" height="16" viewBox="0 0 16 16"><circle cx="8" cy="8" r="6.55" fill="#e6edfc" stroke="#3f78e6" stroke-width="1.1"/><text x="8" y="11.7" text-anchor="middle" font-family="Liberation Sans, sans-serif" font-size="10.4" font-weight="normal" fill="#3f78e6">C</text></svg></span><span class="tx" style="left:107.5px;letter-spacing:0.24px">OpenAiAudioSpeechModel</span></div>
<div class="row" style="top:822px"><span class="arw" style="left:67.5px"><svg class="ar" width="16" height="16" viewBox="0 0 16 16"><path d="M6.1 4.2 L10 8 L6.1 11.8" fill="none" stroke="#7c7f84" stroke-width="1.2" stroke-linecap="round" stroke-linejoin="round"/></svg></span><span class="icw" style="left:88px"><svg class="ic" width="16" height="16" viewBox="0 0 16 16"><circle cx="8" cy="8" r="6.55" fill="#e6edfc" stroke="#3f78e6" stroke-width="1.1"/><text x="8" y="11.7" text-anchor="middle" font-family="Liberation Sans, sans-serif" font-size="10.4" font-weight="normal" fill="#3f78e6">C</text></svg></span><span class="tx" style="left:107.5px;letter-spacing:0.21px">OpenAiAudioSpeechOptions</span></div>
<div class="row" style="top:842px"><span class="icw" style="left:88px"><svg class="ic" width="16" height="16" viewBox="0 0 16 16"><circle cx="8" cy="8" r="6.55" fill="#e6edfc" stroke="#3f78e6" stroke-width="1.1"/><text x="8" y="11.7" text-anchor="middle" font-family="Liberation Sans, sans-serif" font-size="10.4" font-weight="normal" fill="#3f78e6">C</text></svg></span><span class="tx" style="left:107.5px;letter-spacing:0.29px">OpenAiAudioTranscriptionModel</span></div>
  </div>
  <div id="pscroll"></div>
</div>
<div id="pborder"></div>

<!-- editor -->
<div id="curline"></div>
<div id="gutline"></div>
<div class="guide" style="left:550px;top:176px;height:677px"></div>
<div class="guide" style="left:582px;top:308px;height:174px"></div>
<div class="ln" style="top:87px">1873</div>
<div class="cl" style="top:87px">            <span class="an">@JsonProperty</span>(<b class="s">"usage"</b>) Usage usage) { <i class="c">// @formatter:on</i></div>
<div class="ln" style="top:109px">1874</div>
<div class="cl" style="top:109px">    }</div>
<div class="ln" style="top:131px">1875</div>
<div class="ln" style="top:153px">1876</div>
<div class="cl" style="top:153px">    <b class="k">public</b> <b class="k">static</b> <b class="k">class</b> Builder {</div>
<div class="ln" style="top:175px">1877</div>
<div class="ln" style="top:197px">1878</div>
<div class="cl" style="top:197px">        <b class="k">public</b> Builder() {</div>
<div class="ln" style="top:219px">1879</div>
<div class="cl" style="top:219px">        }</div>
<div class="ln" style="top:241px">1880</div>
<div class="ln" style="top:263px">1881</div>
<div class="cl" style="top:263px">        <i class="c">// Copy constructor for mutate()</i></div>
<div class="ln" style="top:285px">1882</div>
<div class="cl" style="top:285px">        <b class="k">public</b> Builder(OpenAiApi api) {</div>
<div class="ln" style="top:307px">1883</div>
<div class="cl" style="top:307px">            <b class="k">this</b>.<b class="f">baseUrl</b> = api.getBaseUrl();</div>
<div class="ln" style="top:329px">1884</div>
<div class="cl" style="top:329px">            <b class="k">this</b>.<b class="f">apiKey</b> = api.getApiKey();</div>
<div class="ln" style="top:351px">1885</div>
<div class="cl" style="top:351px">            <b class="k">this</b>.<b class="f">headers</b> = <b class="k">new</b> LinkedMultiValueMap&lt;&gt;(api.getHeaders());</div>
<div class="ln" style="top:373px">1886</div>
<div class="cl" style="top:373px">            <b class="k">this</b>.<b class="f">completionsPath</b> = api.getCompletionsPath();</div>
<div class="ln" style="top:395px">1887</div>
<div class="cl" style="top:395px">            <b class="k">this</b>.<b class="f">embeddingsPath</b> = api.getEmbeddingsPath();</div>
<div class="ln" style="top:417px">1888</div>
<div class="cl" style="top:417px">            <b class="k">this</b>.<b class="f">restClientBuilder</b> = api.<b class="f">restClient</b> != <b class="k">null</b> ? api.<b class="f">restClient</b>.mutate() : RestClient.<i>builder</i>();</div>
<div class="ln" style="top:439px">1889</div>
<div class="cl" style="top:439px">            <b class="k">this</b>.<b class="f">webClientBuilder</b> = api.<b class="f">webClient</b> != <b class="k">null</b> ? api.<b class="f">webClient</b>.mutate() : WebClient.<i>builder</i>();</div>
<div class="ln" style="top:461px">1890</div>
<div class="cl" style="top:461px">            <b class="k">this</b>.<b class="f">responseErrorHandler</b> = api.getResponseErrorHandler();</div>
<div class="ln" style="top:483px">1891</div>
<div class="cl" style="top:483px">        }</div>
<div class="ln" style="top:505px">1892</div>
<div class="ln" style="top:527px">1893</div>
<div class="cl" style="top:527px">        <b class="k">private</b> String <b class="f">baseUrl</b> = OpenAiApiConstants.<b class="f i">DEFAULT_BASE_URL</b>;</div>
<div class="ln" style="top:549px">1894</div>
<div class="ln" style="top:571px">1895</div>
<div class="cl" style="top:571px">        <b class="k">private</b> ApiKey <b class="f">apiKey</b>;</div>
<div class="ln" style="top:593px">1896</div>
<div class="ln" style="top:615px">1897</div>
<div class="cl" style="top:615px">        <b class="k">private</b> MultiValueMap&lt;String, String&gt; <b class="f">headers</b> = <b class="k">new</b> LinkedMultiValueMap&lt;&gt;();</div>
<div class="ln" style="top:637px">1898</div>
<div class="ln" style="top:659px">1899</div>
<div class="cl" style="top:659px">        <b class="k">private</b> String <b class="f">completionsPath</b> = <b class="s">"/</b><b class="v1s">v1</b><b class="s">/chat/completions"</b>;</div>
<div class="ln" style="top:681px">1900</div>
<div class="ln" style="top:703px">1901</div>
<div class="cl" style="top:703px">        <b class="k">private</b> String <b class="f">embeddingsPath</b> = <b class="s">"/</b><b class="v1y">v1</b><b class="s">/embeddings"</b>;</div>
<div class="ln" style="top:725px">1902</div>
<div class="ln" style="top:747px">1903</div>
<div class="cl" style="top:747px">        <b class="k">private</b> RestClient.Builder <b class="f">restClientBuilder</b> = RestClient.<i>builder</i>();</div>
<div class="ln" style="top:769px">1904</div>
<div class="ln" style="top:791px">1905</div>
<div class="cl" style="top:791px">        <b class="k">private</b> WebClient.Builder <b class="f">webClientBuilder</b> = WebClient.<i>builder</i>();</div>
<div class="ln" style="top:813px">1906</div>
<div class="ln" style="top:835px">1907</div>
<div class="cl" style="top:835px">        <b class="k">private</b> ResponseErrorHandler <b class="f">responseErrorHandler</b> = RetryUtils.<b class="f i">DEFAULT_RESPONSE_ERROR_HANDLER</b>;</div>
<div id="clipmask"></div>

<!-- gutter icons -->
<svg class="abs" style="left:480px;top:287px" width="16" height="16" viewBox="0 0 16 16"><text x="8" y="12.6" text-anchor="middle" font-family="Liberation Sans, sans-serif" font-size="14" fill="#5b7b61">@</text></svg>
<svg class="abs" style="left:480px;top:661px" width="16" height="16" viewBox="0 0 16 16"><defs><linearGradient id="lg1" x1="0" y1="1" x2="1" y2="0"><stop offset="0" stop-color="#5a3fe0"/><stop offset="1" stop-color="#8468f2"/></linearGradient></defs><path d="M5.100 1 L12.900 3.100 L13.900 9.200 L8.800 14.200 L2.600 12.200 L1 5.700 Z" fill="url(#lg1)" stroke="url(#lg1)" stroke-width="0.6" stroke-linejoin="round"/><path d="M5.400 0.300 V5 H11.800 M2.400 3.600 L7.300 12.700 M14.600 6.300 L7.800 13.400" stroke="#fbf8ff" stroke-width="1.150" fill="none"/></svg>

<!-- tabs -->
<div id="tabact"></div>
<div id="tabline"></div><div id="tabul"></div>
<span class="abs" style="left:471px;top:33px"><svg class="ic" width="16" height="16" viewBox="0 0 16 16"><circle cx="8" cy="8" r="6.55" fill="#e6edfc" stroke="#3f78e6" stroke-width="1.1"/><text x="8" y="11.7" text-anchor="middle" font-family="Liberation Sans, sans-serif" font-size="10.4" font-weight="normal" fill="#3f78e6">C</text></svg></span>
<div class="tab" style="left:492px;letter-spacing:0.08px">OpenAiApi.java</div>
<svg class="abs" style="left:593px;top:33px" width="16" height="16" viewBox="0 0 16 16"><path d="M4.500 4.500 L11.500 11.500 M11.500 4.500 L4.500 11.500" stroke="#9a9da5" stroke-width="1.050"/></svg>
<svg class="abs" style="left:628px;top:33px" width="18" height="16" viewBox="0 0 18 16"><path d="M13.800 2 C11.500 5 4.500 3.300 2.300 8 C1.200 10.800 3.600 13 7 12.600 H9.300 M13.800 2 C14.300 4.200 13.800 6.300 12.500 7.800 M1.800 13.600 L3.800 11.800" fill="none" stroke="#4f8a55" stroke-width="1.100" stroke-linecap="round" stroke-linejoin="round"/><circle cx="13.100" cy="12.400" r="2.900" fill="none" stroke="#4f8a55" stroke-width="1.050"/><path d="M13.100 9 V12.300" stroke="#4f8a55" stroke-width="1.050"/></svg>
<div class="tab g" style="left:649px;letter-spacing:0.19px">application.yml</div>
<div class="abs" style="left:783px;top:29.500px;font-size:18px;line-height:20px;font-style:italic;color:#5b8fe6">m</div>
<div class="tab g" style="left:804px;letter-spacing:0.28px">pom.xml (S15-openai-style-model)</div>
<div class="abs md" style="left:1061.5px;top:35px">M</div><svg class="abs" style="left:1072.0px;top:36px" width="7" height="10" viewBox="0 0 7 10"><path d="M3.500 1 V8.300 M1 5.800 L3.500 8.400 L6 5.800" fill="none" stroke="#5f92e2" stroke-width="1.5" stroke-linejoin="round"/></svg>
<div class="tab" style="left:1083px;color:#37663f;letter-spacing:0.1px">09.ChatClient使用说明.md</div>
<div class="abs md" style="left:1284.5px;top:35px">M</div><svg class="abs" style="left:1295.0px;top:36px" width="7" height="10" viewBox="0 0 7 10"><path d="M3.500 1 V8.300 M1 5.800 L3.500 8.400 L6 5.800" fill="none" stroke="#5f92e2" stroke-width="1.5" stroke-linejoin="round"/></svg>
<div class="tab" style="left:1306px;color:#37663f">04.聊天上下文.md</div>

<!-- search bar -->
<div id="searchline"></div>
<div class="vdiv" style="left:463px"></div>
<div class="vdiv" style="left:914px"></div>
<svg class="abs" style="left:439px;top:73px" width="16" height="16" viewBox="0 0 16 16"><path d="M6.200 4.300 L9.900 8 L6.200 11.700" fill="none" stroke="#6f8a75" stroke-width="1.1" stroke-linecap="round" stroke-linejoin="round"/></svg>
<svg class="abs" style="left:478px;top:73px" width="20" height="16" viewBox="0 0 20 16"><circle cx="7" cy="7.5" r="4.3" fill="none" stroke="#5a705f" stroke-width="1.1"/><path d="M10.2 10.7 L13.5 14" stroke="#5a705f" stroke-width="1.1" stroke-linecap="round"/><path d="M14 7.5 H18 L16 9.8 Z" fill="#5a705f"/></svg>
<div class="abs" style="left:510px;top:72px;font-size:13px;line-height:18px;color:#1e1f22">v1</div>
<svg class="abs" style="left:781px;top:74px" width="16" height="16" viewBox="0 0 16 16"><path d="M5 5 L11 11 M11 5 L5 11" stroke="#a9b9ab" stroke-width="1.1"/></svg>
<svg class="abs" style="left:803px;top:74px" width="18" height="16" viewBox="0 0 18 16"><path d="M5.5 5 L2.5 8.5 L5.5 12 M2.5 8.500 H12 Q15 8.5 15 5.5 Q15 3 12 3 H9" fill="none" stroke="#5f7a64" stroke-width="1.1" stroke-linecap="round" stroke-linejoin="round"/></svg>
<div class="abs" style="left:833px;top:73px;font-size:13px;line-height:18px;color:#5f7a64">Cc</div>
<div class="abs" style="left:860px;top:73px;font-size:13px;line-height:18px;color:#5f7a64">W</div>
<div class="abs" style="left:887px;top:72px;font-size:13px;line-height:18px;color:#5f7a64">.<span style="font-size:18px;position:relative;top:4.500px;left:0.500px;line-height:10px">*</span></div>
<div class="abs" style="left:959px;top:73px;font-size:11px;line-height:16px;color:#8fa393">1/2</div>
<svg class="abs" style="left:1010px;top:73px" width="16" height="16" viewBox="0 0 16 16"><path d="M8 13.500 V3 M4 7 L8 3 L12 7" fill="none" stroke="#5f7a64" stroke-width="1.1" stroke-linecap="round" stroke-linejoin="round"/></svg>
<svg class="abs" style="left:1036px;top:73px" width="16" height="16" viewBox="0 0 16 16"><path d="M8 2.500 V13 M4 9 L8 13 L12 9" fill="none" stroke="#5f7a64" stroke-width="1.1" stroke-linecap="round" stroke-linejoin="round"/></svg>
<svg class="abs" style="left:1062px;top:73px" width="16" height="16" viewBox="0 0 16 16"><path d="M2.500 3 H13.500 L9.500 8 V13 L6.500 11.500 V8 Z" fill="none" stroke="#5f7a64" stroke-width="1.1" stroke-linejoin="round"/></svg>
<svg class="abs" style="left:1088px;top:73px" width="16" height="16" viewBox="0 0 16 16"><circle cx="8" cy="3.5" r="1" fill="#6f8a75"/><circle cx="8" cy="8" r="1" fill="#6f8a75"/><circle cx="8" cy="12.5" r="1" fill="#6f8a75"/></svg>

<div id="redbox"></div>

</body></html>
